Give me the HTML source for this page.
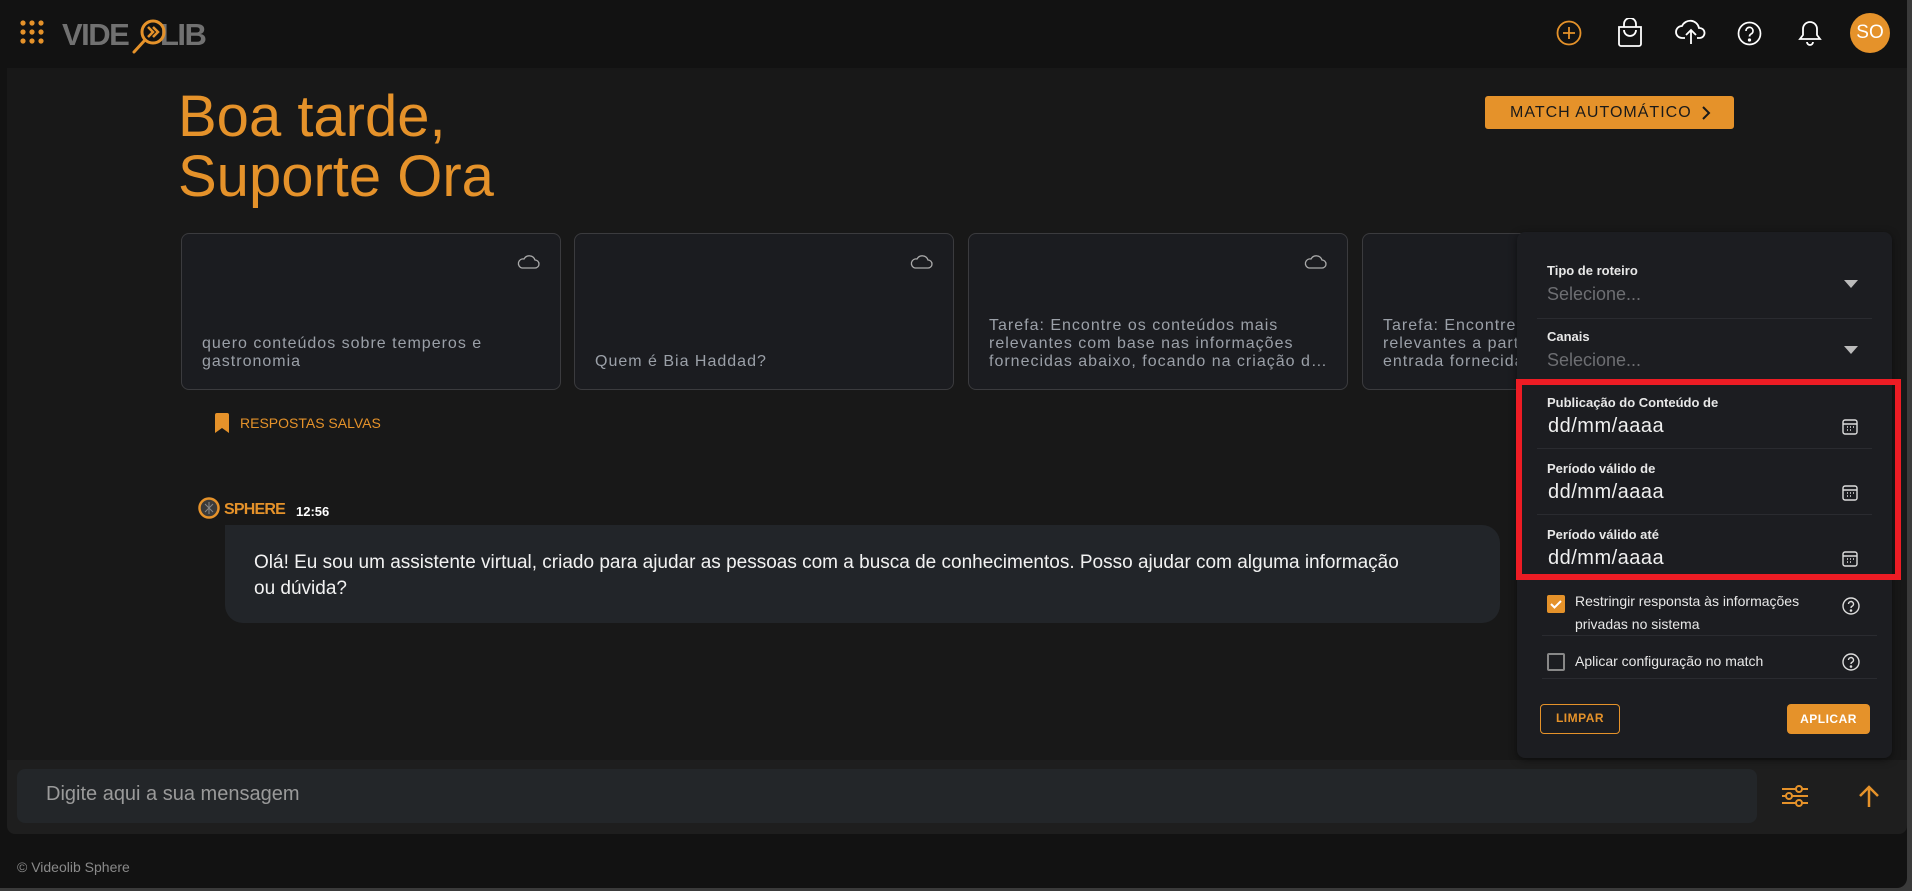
<!DOCTYPE html><html><head><meta charset="utf-8"><style>
*{margin:0;padding:0;box-sizing:border-box}
body{width:1912px;height:891px;background:#3a3a3a;font-family:"Liberation Sans",sans-serif;position:relative;overflow:hidden}
.a{position:absolute}
.win{left:0;top:0;width:1907px;height:888px;background:#121212;border-radius:0 0 10px 0}
.main{left:7px;top:68px;width:1900px;height:692px;background:#181818}
.card{top:233px;width:380px;height:157px;background:#1b1c20;border:1px solid #3b3b3e;border-radius:8px}
.card p{position:absolute;left:20px;bottom:18px;right:20px;font-size:16px;letter-spacing:1px;line-height:18px;color:#9ba0a8}
.card svg{position:absolute;right:20px;top:18px}
.lbl{font-size:13px;color:#e8e8e8;font-weight:bold;left:1547px}
.sel{font-size:18px;color:#6d6e72;left:1547px}
.dt{font-size:20px;color:#f0f0f0;left:1548px;letter-spacing:.5px}
.sep{left:1537px;width:335px;height:1px;background:#2a2b30}
.cal{left:1842px}
</style></head><body>
<div class="a win"></div>
<div class="a main"></div>
<svg class="a" style="left:20px;top:20px" width="24" height="24"><g fill="#e5922a"><circle cx="3" cy="3" r="2.6"/><circle cx="12" cy="3" r="2.6"/><circle cx="21" cy="3" r="2.6"/><circle cx="3" cy="12" r="2.6"/><circle cx="12" cy="12" r="2.6"/><circle cx="21" cy="12" r="2.6"/><circle cx="3" cy="21" r="2.6"/><circle cx="12" cy="21" r="2.6"/><circle cx="21" cy="21" r="2.6"/></g></svg>
<div class="a" style="left:62px;top:17px;font-size:31px;font-weight:bold;color:#717171;letter-spacing:-1.5px">VIDE</div>
<div class="a" style="left:160px;top:17px;font-size:31px;font-weight:bold;color:#717171;letter-spacing:-1.5px">LIB</div>
<svg class="a" style="left:130px;top:16px" width="40" height="40"><circle cx="23" cy="16" r="11" fill="none" stroke="#e5922a" stroke-width="3"/><line x1="15" y1="24" x2="4" y2="36" stroke="#e5922a" stroke-width="3" stroke-linecap="round"/><path d="M18 11l5 5-5 5M23 11l5 5-5 5" fill="none" stroke="#e5922a" stroke-width="2.5"/></svg>
<svg class="a" style="left:1556px;top:20px" width="26" height="26"><circle cx="13" cy="13" r="11.5" fill="none" stroke="#e5922a" stroke-width="1.8"/><path d="M13 7v12M7 13h12" stroke="#e5922a" stroke-width="1.8"/></svg>
<svg class="a" style="left:1617px;top:18px" width="26" height="30" fill="none" stroke="#fff" stroke-width="1.8"><path d="M2 9h22v17a2 2 0 0 1-2 2H4a2 2 0 0 1-2-2z"/><path d="M7 9V6a6 6 0 0 1 12 0v3"/><path d="M7 12a6 6 0 0 0 12 0"/></svg>
<svg class="a" style="left:1675px;top:16px" width="32" height="30" fill="none" stroke="#fff" stroke-width="1.8"><path d="M10 22H7a6 6 0 0 1 0-12 9 9 0 0 1 17 2 5 5 0 0 1 1 10h-3"/><path d="M16 28V14M11 19l5-5 5 5"/></svg>
<svg class="a" style="left:1737px;top:21px" width="25" height="25" fill="none" stroke="#fff" stroke-width="1.7"><circle cx="12.5" cy="12.5" r="11"/><path d="M9 10a3.5 3.5 0 1 1 5 3c-1.2.6-1.5 1.3-1.5 2.5"/><circle cx="12.5" cy="19" r=".8" fill="#fff"/></svg>
<svg class="a" style="left:1797px;top:19px" width="26" height="28" fill="none" stroke="#fff" stroke-width="1.8"><path d="M13 3a7 7 0 0 0-7 7v6l-3 4h20l-3-4v-6a7 7 0 0 0-7-7z"/><path d="M10 23a3 3 0 0 0 6 0"/></svg>
<div class="a" style="left:1850px;top:13px;width:40px;height:40px;border-radius:50%;background:#e5922a;color:#fff;font-size:19px;text-align:center;line-height:40px">SO</div>
<div class="a" style="left:178px;top:87px;font-size:58px;line-height:60px;color:#e5922a">Boa tarde,<br>Suporte Ora</div>
<div class="a" style="left:1485px;top:96px;width:249px;height:33px;background:#e5922a;border-radius:3px;color:#1a1a1a;font-size:16px;letter-spacing:1px;line-height:33px;padding-left:25px">MATCH AUTOMÁTICO<svg style="position:absolute;left:216px;top:10px" width="10" height="14"><path d="M2 1l6 6-6 6" fill="none" stroke="#1a1a1a" stroke-width="2"/></svg></div>
<div class="a card" style="left:181px"><svg width="24" height="18"><path d="M6 16h13a4 4 0 0 0 0-8 6 6 0 0 0-11-1A4.5 4.5 0 0 0 6 16z" fill="none" stroke="#aaa" stroke-width="1.3"/></svg><p>quero conteúdos sobre temperos e gastronomia</p></div>
<div class="a card" style="left:574px"><svg width="24" height="18"><path d="M6 16h13a4 4 0 0 0 0-8 6 6 0 0 0-11-1A4.5 4.5 0 0 0 6 16z" fill="none" stroke="#aaa" stroke-width="1.3"/></svg><p>Quem é Bia Haddad?</p></div>
<div class="a card" style="left:968px"><svg width="24" height="18"><path d="M6 16h13a4 4 0 0 0 0-8 6 6 0 0 0-11-1A4.5 4.5 0 0 0 6 16z" fill="none" stroke="#aaa" stroke-width="1.3"/></svg><p style="white-space:nowrap">Tarefa: Encontre os conteúdos mais<br>relevantes com base nas informações<br>fornecidas abaixo, focando na criação d…</p></div>
<div class="a card" style="left:1362px"><p style="white-space:nowrap">Tarefa: Encontre os conteúdos mais<br>relevantes a partir da<br>entrada fornecida</p></div>
<svg class="a" style="left:215px;top:413px" width="14" height="20"><path d="M0 2a2 2 0 0 1 2-2h10a2 2 0 0 1 2 2v18l-7-5-7 5z" fill="#e5922a"/></svg>
<div class="a" style="left:240px;top:415px;font-size:14px;color:#e5922a">RESPOSTAS SALVAS</div>
<svg class="a" style="left:198px;top:497px" width="22" height="22"><circle cx="11" cy="11" r="9.5" fill="#3a3a3a" stroke="#e5922a" stroke-width="2.5"/><path d="M7 7l8 8M15 7l-8 8M11 5v12" stroke="#888" stroke-width="1"/></svg>
<div class="a" style="left:224px;top:501px;font-size:16px;font-weight:bold;color:#e5922a;letter-spacing:-.8px">SPHERE</div>
<div class="a" style="left:296px;top:504px;font-size:13px;font-weight:bold;color:#fff">12:56</div>
<div class="a" style="left:225px;top:525px;width:1275px;height:98px;background:#222529;border-radius:0 18px 18px 18px"></div>
<div class="a" style="left:254px;top:550px;width:1210px;font-size:19px;line-height:26px;color:#f2f2f2">Olá! Eu sou um assistente virtual, criado para ajudar as pessoas com a busca de conhecimentos. Posso ajudar com alguma informação<br>ou dúvida?</div>
<div class="a" style="left:7px;top:760px;width:1900px;height:74px;background:#1e1e1e;border-radius:0 0 8px 8px"></div>
<div class="a" style="left:17px;top:769px;width:1740px;height:54px;background:#232629;border-radius:8px"></div>
<div class="a" style="left:46px;top:783px;font-size:20px;color:#9a9a9a">Digite aqui a sua mensagem</div>
<svg class="a" style="left:1781px;top:785px" width="28" height="22" stroke="#e5922a" stroke-width="2" fill="#1e1e1e"><path d="M1 4h26M1 11h26M1 18h26"/><circle cx="18" cy="4" r="3"/><circle cx="8" cy="11" r="3"/><circle cx="18" cy="18" r="3"/></svg>
<svg class="a" style="left:1858px;top:784px" width="22" height="24" fill="none" stroke="#e5922a" stroke-width="2.5"><path d="M11 23V3M2 12l9-9 9 9"/></svg>
<div class="a" style="left:17px;top:859px;font-size:14px;color:#8a8a8a">© Videolib Sphere</div>
<div class="a" style="left:1517px;top:232px;width:375px;height:526px;background:#1c1d21;border-radius:8px;box-shadow:0 2px 8px rgba(0,0,0,.5)"></div>
<div class="a lbl" style="top:263px">Tipo de roteiro</div>
<div class="a sel" style="top:284px">Selecione...</div>
<svg class="a" style="left:1844px;top:280px" width="14" height="8"><path d="M0 0h14L7 8z" fill="#bbb"/></svg>
<div class="a sep" style="top:318px"></div>
<div class="a lbl" style="top:329px">Canais</div>
<div class="a sel" style="top:350px">Selecione...</div>
<svg class="a" style="left:1844px;top:346px" width="14" height="8"><path d="M0 0h14L7 8z" fill="#bbb"/></svg>
<div class="a" style="left:1516px;top:379px;width:385px;height:201px;border:6px solid #ed1c24"></div>
<div class="a lbl" style="top:395px">Publicação do Conteúdo de</div>
<div class="a dt" style="top:415px">dd/mm/aaaa</div>
<div class="a sep" style="top:448px"></div>
<div class="a lbl" style="top:461px">Período válido de</div>
<div class="a dt" style="top:481px">dd/mm/aaaa</div>
<div class="a sep" style="top:514px"></div>
<div class="a lbl" style="top:527px">Período válido até</div>
<div class="a dt" style="top:547px">dd/mm/aaaa</div>
<svg class="a cal" style="top:419px" width="16" height="16" fill="none" stroke="#ddd" stroke-width="1.4"><rect x="1" y="1" width="14" height="14" rx="2"/><path d="M1 5h14M5 8h1M8 8h1M11 8h1M5 11h1M8 11h1"/></svg>
<svg class="a cal" style="top:485px" width="16" height="16" fill="none" stroke="#ddd" stroke-width="1.4"><rect x="1" y="1" width="14" height="14" rx="2"/><path d="M1 5h14M5 8h1M8 8h1M11 8h1M5 11h1M8 11h1"/></svg>
<svg class="a cal" style="top:551px" width="16" height="16" fill="none" stroke="#ddd" stroke-width="1.4"><rect x="1" y="1" width="14" height="14" rx="2"/><path d="M1 5h14M5 8h1M8 8h1M11 8h1M5 11h1M8 11h1"/></svg>
<div class="a" style="left:1547px;top:595px;width:18px;height:18px;background:#e5922a;border-radius:2px"><svg width="18" height="18"><path d="M4 9l3.5 3.5L14 6" fill="none" stroke="#fff" stroke-width="2"/></svg></div>
<div class="a" style="left:1575px;top:590px;font-size:14px;line-height:23px;color:#e8e8e8">Restringir responsta às informações<br>privadas no sistema</div>
<svg class="a" style="left:1842px;top:597px" width="18" height="18" fill="none" stroke="#ddd" stroke-width="1.4"><circle cx="9" cy="9" r="8"/><path d="M6.5 7a2.5 2.5 0 1 1 3.5 2.3c-.8.4-1 .9-1 1.7"/><circle cx="9" cy="13.5" r=".6" fill="#ddd"/></svg>
<div class="a sep" style="left:1542px;top:635px"></div>
<div class="a" style="left:1547px;top:653px;width:18px;height:18px;border:2px solid #888;border-radius:2px"></div>
<div class="a" style="left:1575px;top:653px;font-size:14px;color:#e8e8e8">Aplicar configuração no match</div>
<svg class="a" style="left:1842px;top:653px" width="18" height="18" fill="none" stroke="#ddd" stroke-width="1.4"><circle cx="9" cy="9" r="8"/><path d="M6.5 7a2.5 2.5 0 1 1 3.5 2.3c-.8.4-1 .9-1 1.7"/><circle cx="9" cy="13.5" r=".6" fill="#ddd"/></svg>
<div class="a sep" style="left:1542px;top:678px"></div>
<div class="a" style="left:1540px;top:704px;width:80px;height:30px;border:1.5px solid #e5922a;border-radius:4px;color:#e5922a;font-size:12px;font-weight:bold;text-align:center;line-height:27px;letter-spacing:.5px">LIMPAR</div>
<div class="a" style="left:1787px;top:704px;width:83px;height:30px;background:#e5922a;border-radius:4px;color:#fff;font-size:12px;font-weight:bold;text-align:center;line-height:30px;letter-spacing:.5px">APLICAR</div>
</body></html>
